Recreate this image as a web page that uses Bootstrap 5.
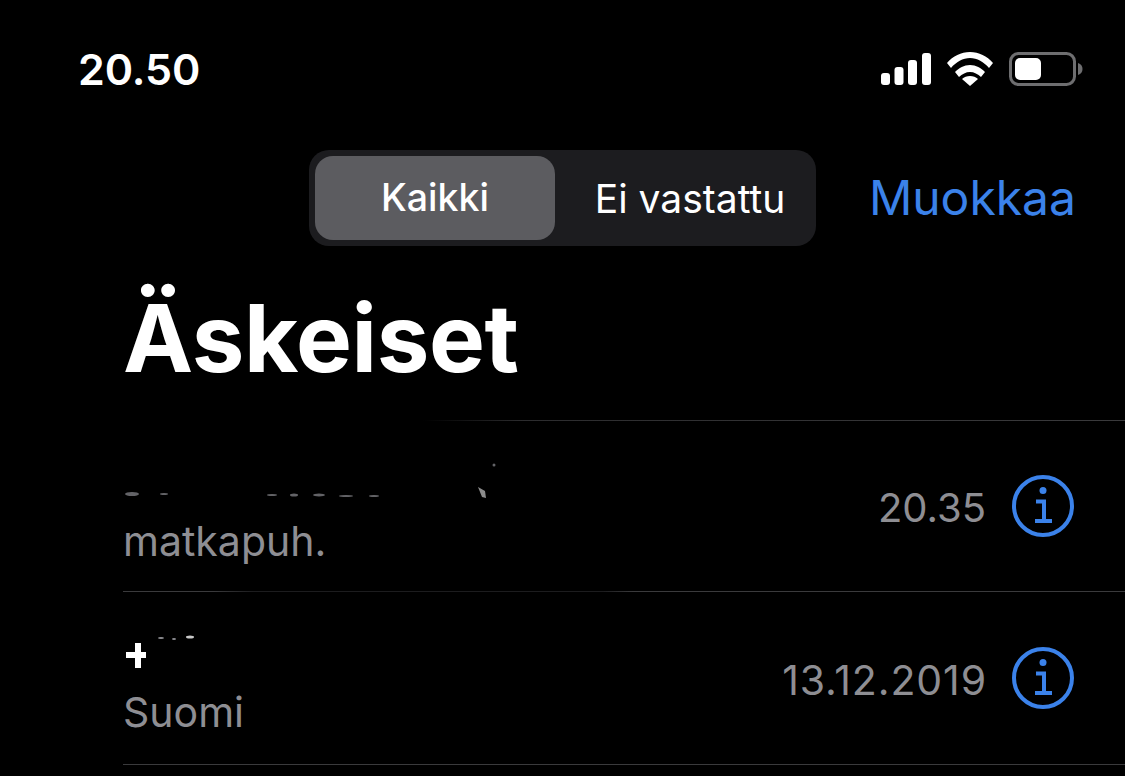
<!DOCTYPE html>
<html lang="fi">
<head>
    <meta charset="UTF-8">
    <meta name="viewport" content="width=device-width, initial-scale=1.0">
    <title>Äskeiset</title>
    <link href="https://cdn.jsdelivr.net/npm/bootstrap@5.3.0/dist/css/bootstrap.min.css" rel="stylesheet">
    <style>
        body { background: #000; color: #fff; font-family: Inter, "Liberation Sans", sans-serif; height: 776px; overflow: hidden; }
        .status-bar { height: 150px; padding: 2px 42px 14px 78px; }
        .status-time { font-size: 43px; font-weight: 600; line-height: 1; letter-spacing: -0.1px; }
        .top-bar { height: 96px; padding-left: 309px; padding-right: 49px; }
        .seg-wrap { width: 507px; height: 96px; padding: 6px; background: #1c1c1f; border-radius: 20px; }
        .seg-item { font-size: 39px; font-weight: 400; line-height: 1; }
        .seg-plain { padding-left: 15px; }
        .seg-active { width: 240px; background: #5c5c60; border-radius: 18px; font-size: 37.500px; font-weight: 500; }
        .edit-link { font-size: 48px; color: #3b82ea; line-height: 1; text-decoration: none; }
        .page-title { font-size: 94px; font-weight: 700; line-height: 1; margin: 0; padding: 45px 0 0 123px; height: 174px; letter-spacing: -0.4px; }
        .sep { height: 1px; margin-left: 123px; background: #3a3a3c; }
        .sep-first { background: linear-gradient(90deg, #000 0, #000 300px, #2c2c2e 400px, #3a3a3c 100%); }
        .sep-second { background: linear-gradient(90deg, #3a3a3c 0, #3a3a3c 90px, #1c1c1e 130px, #1c1c1e 480px, #3a3a3c 510px); }
        .call-row { height: 170px; padding: 0 51px 0 123px; }
        .call-row-b { height: 172px; }
        .call-name { height: 100px; }
        .call-sub { font-size: 41px; line-height: 1; color: #8e8e93; }
        .call-time { font-size: 40px; line-height: 1; color: #8e8e93; margin-right: 26px; padding-top: 4px; }
        .call-date { font-size: 41px; letter-spacing: 0.9px; margin-right: 25px; }
        .info-icon { width: 62px; height: 62px; display: block; }
    </style>
</head>
<body>
    <div class="status-bar d-flex justify-content-between align-items-center">
        <div class="status-time">20.50</div>
        <div class="d-flex align-items-center">
            <!-- signal -->
            <svg width="50" height="32" viewBox="0 0 50 32" fill="#fff">
                <rect x="0" y="20" width="9" height="12" rx="3"/>
                <rect x="13.500" y="14" width="9" height="18" rx="3"/>
                <rect x="27" y="7" width="9" height="25" rx="3"/>
                <rect x="41" y="0" width="9" height="32" rx="3"/>
            </svg>
            <!-- wifi -->
            <svg class="ms-3" width="46" height="34" viewBox="0 0 46 34" fill="#fff">
                <path d="M0 11C6 4 14 0 23 0s17 4 23 11l-4 5C37 10 30 6 23 6S9 10 4 16z"/>
                <path d="M8 20c4-4 9-7 15-7s11 3 15 7l-4 5c-3-3-7-5-11-5s-8 2-11 5z"/>
                <path d="M15 27c2-2 5-3 8-3s6 1 8 3l-8 7z"/>
            </svg>
            <!-- battery -->
            <svg class="ms-3" width="74" height="34" viewBox="0 0 74 34">
                <rect x="1.500" y="1.500" width="64" height="31" rx="8" fill="none" stroke="#6e6e70" stroke-width="3"/>
                <rect x="6" y="6" width="26" height="22" rx="5" fill="#fff"/>
                <path d="M69 11c3 1 4.500 3 4.500 6s-1.500 5-4.500 6z" fill="#6e6e70"/>
            </svg>
        </div>
    </div>

    <div class="top-bar d-flex justify-content-between align-items-center">
        <div class="seg-wrap d-flex">
            <div class="seg-item seg-active d-flex align-items-center justify-content-center">Kaikki</div>
            <div class="seg-item seg-plain flex-grow-1 d-flex align-items-center justify-content-center">Ei vastattu</div>
        </div>
        <a class="edit-link" href="#">Muokkaa</a>
    </div>

    <h1 class="page-title">Äskeiset</h1>

    <div class="sep sep-first"></div>
    <div class="call-row d-flex justify-content-between align-items-center">
        <div class="align-self-start">
            <div class="call-name">
                <!-- what is left of the blacked out name -->
                <svg width="390" height="96" viewBox="0 0 390 96" fill="#8e8e93" opacity="0.7">
                    <ellipse cx="9" cy="73" rx="7" ry="2"/>
                    <ellipse cx="41" cy="73" rx="4" ry="1"/>
                    <ellipse cx="149" cy="74" rx="5" ry="1"/>
                    <ellipse cx="171" cy="74" rx="4" ry="1.500"/>
                    <ellipse cx="196" cy="74" rx="6" ry="1.500"/>
                    <ellipse cx="223" cy="75" rx="7" ry="1"/>
                    <ellipse cx="251" cy="75" rx="5" ry="1"/>
                    <path d="M355 66l7 4 1 7-4-1z" fill="#c8c8c8"/>
                    <circle cx="371" cy="44" r="1.500"/>
                </svg>
            </div>
            <div class="call-sub">matkapuh.</div>
        </div>
        <div class="d-flex align-items-center">
            <span class="call-time">20.35</span>
            <svg class="info-icon" viewBox="0 0 62 62" fill="none" stroke="#3b82ea">
                <circle cx="31" cy="31" r="29" stroke-width="4"/>
                <circle cx="31" cy="15.500" r="3.500" fill="#3b82ea" stroke="none"/>
                <path d="M24 26.500h8v19.500M23 46h17" stroke-width="4"/>
            </svg>
        </div>
    </div>

    <div class="sep sep-second"></div>
    <div class="call-row call-row-b d-flex justify-content-between align-items-center">
        <div class="align-self-start">
            <div class="call-name">
                <svg width="200" height="96" viewBox="0 0 200 96" fill="#fff">
                    <path d="M12 51h6v9h5v6h-5v10h-6V66H3v-6h9z"/>
                    <ellipse cx="38" cy="46" rx="3" ry="1" fill="#8e8e93"/>
                    <ellipse cx="51" cy="47" rx="2" ry="1" fill="#8e8e93"/>
                    <ellipse cx="67" cy="45" rx="4" ry="1.500" fill="#c8c8c8"/>
                </svg>
            </div>
            <div class="call-sub">Suomi</div>
        </div>
        <div class="d-flex align-items-center">
            <span class="call-time call-date">13.12.2019</span>
            <svg class="info-icon" viewBox="0 0 62 62" fill="none" stroke="#3b82ea">
                <circle cx="31" cy="31" r="29" stroke-width="4"/>
                <circle cx="31" cy="15.500" r="3.500" fill="#3b82ea" stroke="none"/>
                <path d="M24 26.500h8v19.500M23 46h17" stroke-width="4"/>
            </svg>
        </div>
    </div>
    <div class="sep"></div>

    <script src="https://cdn.jsdelivr.net/npm/bootstrap@5.3.0/dist/js/bootstrap.bundle.min.js"></script>
</body>
</html>
